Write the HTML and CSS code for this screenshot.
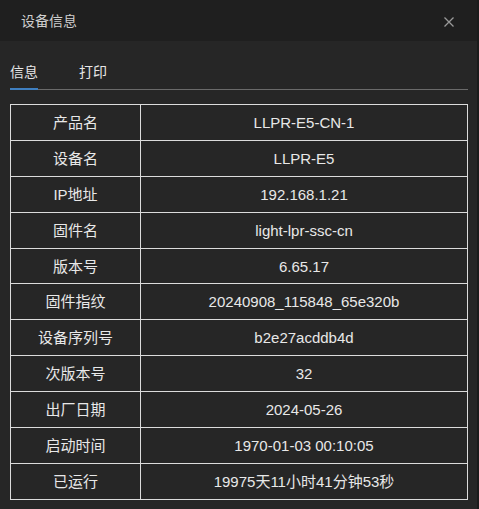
FILE: index.html
```html
<!DOCTYPE html>
<html lang="zh">
<head>
<meta charset="utf-8">
<link rel="stylesheet" href="styles.css">
</head>
<body>
<div class="dialog">
  <div class="header">
    <span class="title">设备信息</span>
    <svg class="close" width="10" height="10" viewBox="0 0 10 10"><path d="M0.5 0.5 L9.5 9.5 M9.5 0.5 L0.5 9.5" stroke="#9a9a9a" stroke-width="1.3" fill="none"/></svg>
  </div>
  <div class="body">
    <div class="tabs">
      <div class="tab active">信息</div>
      <div class="tab">打印</div>
    </div>
    <table class="info">
      <tr><td>产品名</td><td>LLPR-E5-CN-1</td></tr>
      <tr><td>设备名</td><td>LLPR-E5</td></tr>
      <tr><td>IP地址</td><td>192.168.1.21</td></tr>
      <tr><td>固件名</td><td>light-lpr-ssc-cn</td></tr>
      <tr><td>版本号</td><td>6.65.17</td></tr>
      <tr><td>固件指纹</td><td>20240908_115848_65e320b</td></tr>
      <tr><td>设备序列号</td><td>b2e27acddb4d</td></tr>
      <tr><td>次版本号</td><td>32</td></tr>
      <tr><td>出厂日期</td><td>2024-05-26</td></tr>
      <tr><td>启动时间</td><td>1970-01-03 00:10:05</td></tr>
      <tr><td>已运行</td><td>19975天11小时41分钟53秒</td></tr>
    </table>
  </div>
</div>
</body>
</html>
```
FILE: styles.css
```css
html, body {
  margin: 0;
  padding: 0;
  background: #1b1b1b;
}
body {
  font-family: "Liberation Sans", Arial, "Noto Sans CJK SC", sans-serif;
  width: 479px;
  height: 509px;
  overflow: hidden;
}
.dialog {
  width: 477px;
  height: 509px;
  background: #262626;
}
.header {
  height: 41px;
  background: #1f1f1f;
  display: flex;
  align-items: center;
  justify-content: space-between;
  padding: 0 23px 0 21px;
  box-sizing: border-box;
}
.title {
  font-size: 14px;
  color: #cfcfcf;
  font-family: "Noto Sans CJK SC", sans-serif;
  line-height: 1;
  margin-top: -1px;
}
.close {
  display: block;
  margin-top: 3px;
}
.body {
  padding: 0 9px 0 10px;
}
.tabs {
  display: flex;
  gap: 41px;
  height: 49px;
  border-bottom: 1px solid #6a6a6a;
  box-sizing: border-box;
  width: 458px;
}
.tab {
  font-family: "Noto Sans CJK SC", sans-serif;
  font-size: 14px;
  color: #e6e6e6;
  line-height: 14px;
  padding-top: 23px;
  box-sizing: border-box;
  position: relative;
}
.tab.active::after {
  content: "";
  position: absolute;
  left: 0;
  right: 0;
  bottom: -1px;
  height: 2px;
  background: #3f7fc0;
}
.info {
  margin-top: 14px;
  width: 458px;
  border-collapse: collapse;
  table-layout: fixed;
}
.info td {
  border: 1px solid #dcdcdc;
  height: 34.9px;
  padding: 0;
  text-align: center;
  vertical-align: middle;
  font-size: 15px;
  color: #e8e8e8;
  line-height: 1;
}
.info td:first-child {
  width: 129px;
}
```
